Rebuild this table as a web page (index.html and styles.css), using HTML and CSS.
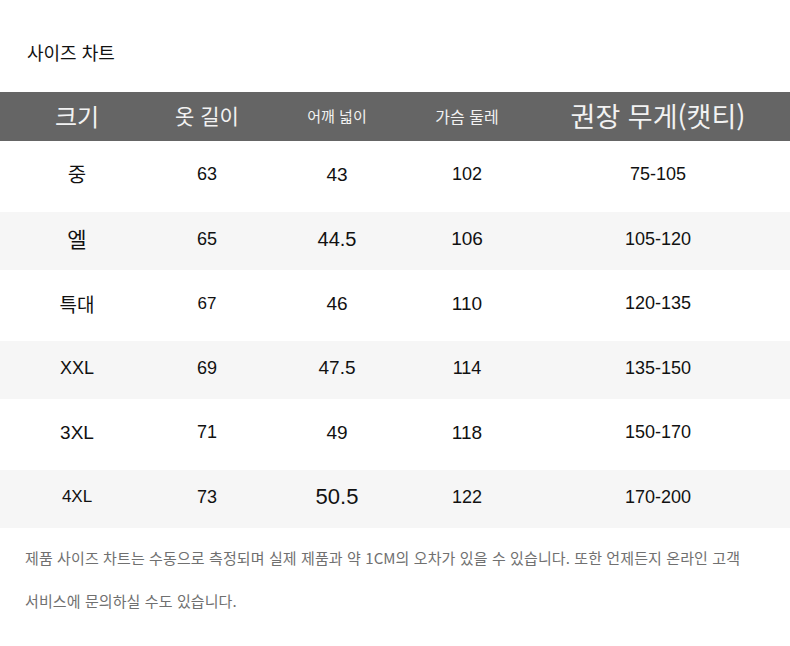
FILE: index.html
```html
<!DOCTYPE html>
<html lang="ko">
<head>
<meta charset="utf-8">
<title>사이즈 차트</title>
<link rel="stylesheet" href="styles.css">
</head>
<body>
<div class="page">
  <h1 class="title">사이즈 차트</h1>
  <div class="chart">
    <div class="row head">
      <div class="cell h-xl">크기</div>
      <div class="cell h-l">옷 길이</div>
      <div class="cell h-s">어깨 넓이</div>
      <div class="cell h-m">가슴 둘레</div>
      <div class="cell h-xxl">권장 무게(캣티)</div>
    </div>
    <div class="row tall">
      <div class="cell ko k-m">중</div>
      <div class="cell n">63</div>
      <div class="cell n n-m">43</div>
      <div class="cell n">102</div>
      <div class="cell n">75-105</div>
    </div>
    <div class="row short alt">
      <div class="cell ko k-l">엘</div>
      <div class="cell n">65</div>
      <div class="cell n n-l">44.5</div>
      <div class="cell n n-m">106</div>
      <div class="cell n">105-120</div>
    </div>
    <div class="row tall">
      <div class="cell ko k-s">특대</div>
      <div class="cell n n-s">67</div>
      <div class="cell n n-m">46</div>
      <div class="cell n n-m">110</div>
      <div class="cell n">120-135</div>
    </div>
    <div class="row short alt">
      <div class="cell n">XXL</div>
      <div class="cell n">69</div>
      <div class="cell n n-m">47.5</div>
      <div class="cell n">114</div>
      <div class="cell n">135-150</div>
    </div>
    <div class="row tall">
      <div class="cell n n-m">3XL</div>
      <div class="cell n">71</div>
      <div class="cell n n-m">49</div>
      <div class="cell n n-m">118</div>
      <div class="cell n">150-170</div>
    </div>
    <div class="row short alt">
      <div class="cell n n-s">4XL</div>
      <div class="cell n">73</div>
      <div class="cell n n-xl">50.5</div>
      <div class="cell n">122</div>
      <div class="cell n">170-200</div>
    </div>
  </div>
  <p class="note">제품 사이즈 차트는 수동으로 측정되며 실제 제품과 약 1CM의 오차가 있을 수 있습니다. 또한 언제든지 온라인 고객<br>서비스에 문의하실 수도 있습니다.</p>
</div>
</body>
</html>
```

FILE: styles.css
```css
html, body {
  margin: 0;
  padding: 0;
  background: #ffffff;
}

.page {
  width: 790px;
  font-family: "Liberation Sans", "Noto Sans CJK KR", sans-serif;
  color: #111111;
}

.title {
  margin: 0;
  padding: 41px 0 0 27px;
  height: 92px;
  box-sizing: border-box;
  font-family: "Noto Sans CJK KR", sans-serif;
  font-size: 18px;
  font-weight: 400;
  line-height: 22px;
  color: #111111;
}

.chart {
  display: flex;
  flex-direction: column;
}

.row {
  display: grid;
  grid-template-columns: 130px 130px 130px 130px 252px;
  padding-left: 12px;
  align-items: center;
}

.head {
  height: 49px;
  background: #656565;
  color: #f2f2f2;
  font-family: "Noto Sans CJK KR", sans-serif;
}

.tall {
  height: 71px;
  background: #ffffff;
}

.short {
  height: 58px;
}

.alt {
  background: #f6f6f6;
}

.cell {
  text-align: center;
  line-height: 1;
  padding-bottom: 5px;
}

.head .cell {
  padding-bottom: 2px;
}

.h-xl { font-size: 24px; }
.h-l { font-size: 21px; }
.h-s { font-size: 15px; }
.h-m { font-size: 16px; }
.h-xxl { font-size: 27px; }

.n {
  font-family: "Liberation Sans", sans-serif;
  font-size: 18px;
}

.n-s { font-size: 17px; }
.n-m { font-size: 19px; }
.n-l { font-size: 20px; }
.n-xl { font-size: 22px; }

.ko {
  font-family: "Noto Sans CJK KR", sans-serif;
}

.k-s { font-size: 19px; }
.k-m { font-size: 20px; }
.k-l { font-size: 21px; }

.note {
  margin: 0;
  padding: 8px 0 0 25px;
  font-family: "Noto Sans CJK KR", sans-serif;
  font-size: 15px;
  letter-spacing: 0.1px;
  line-height: 43px;
  color: #707070;
}
```
